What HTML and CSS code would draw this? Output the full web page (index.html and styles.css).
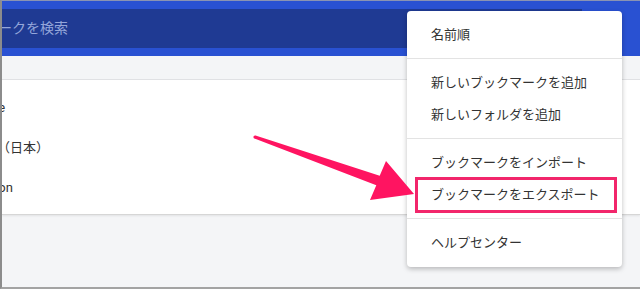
FILE: index.html
```html
<!DOCTYPE html>
<html lang="ja">
<head>
  <meta charset="UTF-8" />
  <meta name="viewport" content="width=device-width, initial-scale=1.0" />
  <title>ブックマーク マネージャ</title>
  <link rel="stylesheet" href="styles.css">
</head>
<body>
  <div class="frame">
    <header class="topbar">
      <div class="search">
        <span class="search-text">ブックマークを検索</span>
      </div>
    </header>

    <div class="toolbar"></div>

    <div class="list">
      <div class="row">Google</div>
      <div class="row">Amazon（日本）</div>
      <div class="row">Amazon</div>
    </div>

    <div class="menu">
      <div class="item">名前順</div>
      <div class="sep"></div>
      <div class="item">新しいブックマークを追加</div>
      <div class="item">新しいフォルダを追加</div>
      <div class="sep"></div>
      <div class="item">ブックマークをインポート</div>
      <div class="item mark">ブックマークをエクスポート</div>
      <div class="sep"></div>
      <div class="item">ヘルプセンター</div>
    </div>

    <svg class="arrow" width="640" height="289" viewBox="0 0 640 289">
      <circle cx="255" cy="137" r="1.6" fill="#ff1461" />
      <polygon fill="#ff1461"
        points="255.5,135.5 379.7,175.8 386,161 414,194 370,200 376.3,185.2 254.5,138.5" />
    </svg>
  </div>
</body>
</html>
```

FILE: styles.css
```css
html, body {
  margin: 0;
  padding: 0;
}
body {
  width: 640px;
  height: 289px;
  overflow: hidden;
  font-family: Roboto, "Noto Sans CJK JP", sans-serif;
  background-color: #fff;
}
.frame {
  position: relative;
  width: 640px;
  height: 289px;
  box-sizing: border-box;
  border-left: 2px solid #8c8c8c;
  border-top: 1px solid #8a93b3;
  border-bottom: 2px solid #a3a3a3;
  background-color: #f4f5f7;
  overflow: hidden;
}
.topbar {
  height: 55px;
  padding-top: 8px;
  box-sizing: border-box;
  background-color: #2951d2;
}
.search {
  width: 580px;
  height: 39px;
  background-color: #1f3a93;
  overflow: hidden;
  white-space: nowrap;
}
.search-text {
  display: inline-block;
  margin-left: -60px;
  font-size: 14px;
  line-height: 39px;
  color: #94a6da;
}
.toolbar {
  height: 23px;
  background-color: #f4f5f7;
  border-bottom: 1px solid #e1e2e5;
}
.list {
  height: 135px;
  box-sizing: border-box;
  padding-top: 8px;
  background-color: #fff;
  border-bottom: 1px solid #d6d6d6;
  box-shadow: 0 1px 2px rgba(0,0,0,0.08);
  overflow: hidden;
}
.row {
  height: 40px;
  line-height: 40px;
  font-size: 13px;
  color: #333;
  white-space: nowrap;
}
.row:nth-child(1) { margin-left: -38px; }
.row:nth-child(2) { margin-left: -53px; }
.row:nth-child(3) { margin-left: -37px; }
.menu {
  position: absolute;
  left: 405px;
  top: 10px;
  width: 215px;
  padding: 8px 0;
  background-color: #fff;
  border-radius: 4px;
  box-shadow: 0 2px 5px rgba(0,0,0,0.25);
}
.item {
  position: relative;
  height: 32px;
  line-height: 32px;
  padding-left: 24px;
  font-size: 13px;
  color: #333;
  white-space: nowrap;
}
.sep {
  height: 16px;
  position: relative;
}
.sep::after {
  content: "";
  position: absolute;
  left: 0;
  right: 0;
  top: 7px;
  height: 1px;
  background-color: #e3e3e3;
}
.mark::before {
  content: "";
  position: absolute;
  left: 8px;
  right: 5px;
  top: -2px;
  bottom: -2px;
  border: 3px solid #f2266b;
}
.arrow {
  position: absolute;
  left: -2px;
  top: -1px;
  pointer-events: none;
}
```
